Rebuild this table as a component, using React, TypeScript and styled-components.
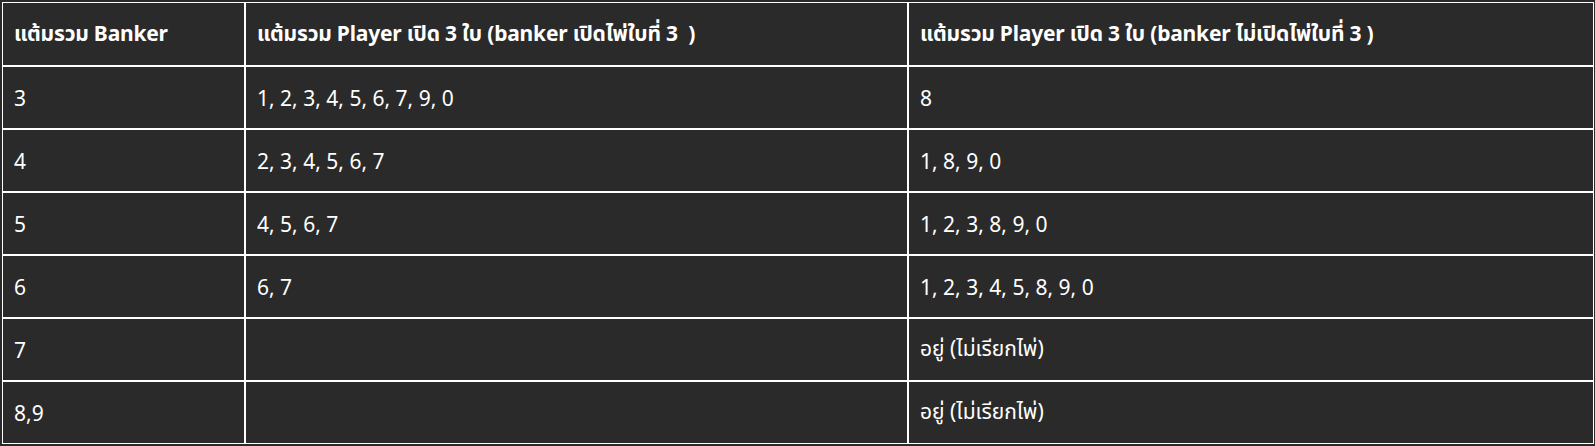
import React from 'react';
import styled, { createGlobalStyle } from 'styled-components';

const rows: string[][] = [
  ['3', '1, 2, 3, 4, 5, 6, 7, 9, 0', '8'],
  ['4', '2, 3, 4, 5, 6, 7', '1, 8, 9, 0'],
  ['5', '4, 5, 6, 7', '1, 2, 3, 8, 9, 0'],
  ['6', '6, 7', '1, 2, 3, 4, 5, 8, 9, 0'],
  ['7', '', 'อยู่ (ไม่เรียกไพ่)'],
  ['8,9', '', 'อยู่ (ไม่เรียกไพ่)'],
];

const App: React.FC = () => {
  return (
    <>
      <GlobalStyle />
      <Page>
        <Table>
          <colgroup>
            <Col $w={241} />
            <Col $w={663} />
            <col />
          </colgroup>
          <thead>
            <tr>
              <HeadCell>แต้มรวม Banker</HeadCell>
              <HeadCell>แต้มรวม Player เปิด 3 ใบ (banker เปิดไพ่ใบที่ 3&nbsp; )</HeadCell>
              <HeadCell>แต้มรวม Player เปิด 3 ใบ (banker ไม่เปิดไพ่ใบที่ 3 )</HeadCell>
            </tr>
          </thead>
          <tbody>
            {rows.map((r, i) => (
              <tr key={i}>
                {r.map((c, j) => (
                  <Cell key={j}>{c}</Cell>
                ))}
              </tr>
            ))}
          </tbody>
        </Table>
      </Page>
    </>
  );
};

export default App;

const GlobalStyle = createGlobalStyle`
  body {
    margin: 0;
    background: #2a2a2a;
    font-family: "Segoe UI", "Noto Sans", "Noto Sans Thai", "Noto Sans Thai UI", sans-serif;
  }
`;

const Page = styled.div`
  padding: 2px;
  background: #2a2a2a;
`;

const Table = styled.table`
  width: 1592px;
  border-collapse: separate;
  border-spacing: 0;
  border: 1px solid #ffffff;
  table-layout: fixed;
  color: #ffffff;

  td + td,
  th + th {
    border-left: 2px solid #ffffff;
  }

  tbody td {
    border-top: 2px solid #ffffff;
  }
`;

const Col = styled.col<{ $w: number }>`
  width: ${(p) => p.$w}px;
`;

const HeadCell = styled.th`
  height: 62px;
  padding: 0 11px;
  text-align: left;
  font-size: 21px;
  font-weight: 700;
  white-space: nowrap;
  letter-spacing: -0.2px;
`;

const Cell = styled.td`
  height: 61px;
  padding: 0 11px;
  font-size: 21px;
  font-weight: 400;
`;
